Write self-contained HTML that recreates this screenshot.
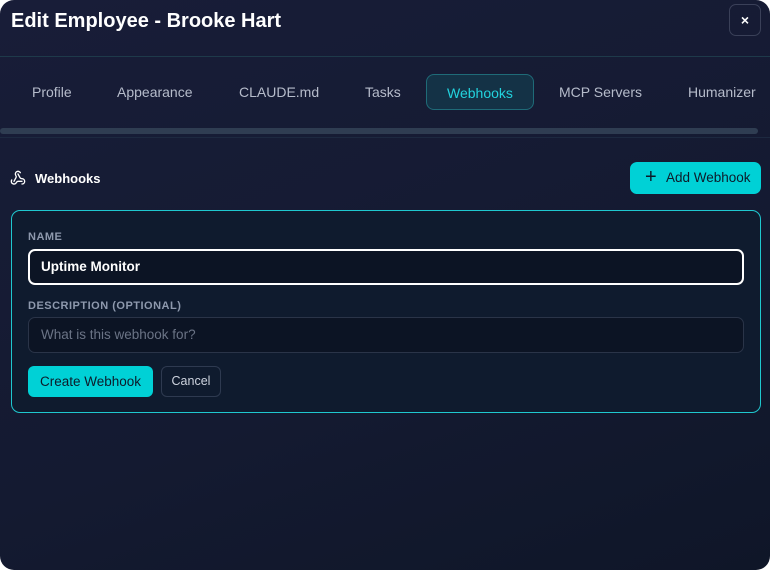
<!DOCTYPE html>
<html><head><style>
*{box-sizing:border-box;margin:0;padding:0}
html,body{width:770px;height:570px;background:#fff;overflow:hidden;font-family:"Liberation Sans",sans-serif}
.modal{position:absolute;left:0;top:0;width:770px;height:570px;border-radius:14px;background:linear-gradient(160deg,#181d38 0%,#141a31 60%,#0f1628 100%);overflow:hidden}
.title{position:absolute;left:11px;top:10px;color:#fff;font-size:20px;font-weight:bold}
.close{position:absolute;left:729px;top:4px;width:32px;height:32px;border:1px solid #3a4058;border-radius:7px;color:#fff;font-weight:bold;font-size:14px;text-align:center;line-height:30px}
.hr1{position:absolute;left:0;top:56px;width:770px;height:1px;background:#1e3a4a}
.tab{position:absolute;top:74px;height:36px;line-height:36px;color:#b6bccb;font-size:14px}
.tab.act{border:1px solid #1f6b78;background:#143246;color:#22d3de;border-radius:8px;padding:0 20px;left:426px;width:108px}
.scroll{position:absolute;left:0;top:128px;width:758px;height:6px;background:#2f3d52;border-radius:3px}
.hr2{position:absolute;left:0;top:137px;width:770px;height:1px;background:#1d2940}
.wh{position:absolute;left:35px;top:171px;color:#fff;font-weight:bold;font-size:13px}
.add{position:absolute;left:630px;top:162px;width:131px;height:32px;background:#00d1d6;border-radius:7px;color:#0d1b2a;font-size:13.5px;line-height:32px;padding-left:36px}
.add:before{content:"+";position:absolute;left:15px;top:-1px;font-size:20px}
.card{position:absolute;left:11px;top:210px;width:750px;height:203px;border:1px solid #1fc8cf;border-radius:9px;background:#0f1b2e}
.lbl{position:absolute;left:16px;color:#8e99ad;font-size:11px;font-weight:bold;letter-spacing:.5px}
.inp{position:absolute;left:16px;width:716px;height:36px;border-radius:7px;background:#0c1424;font-size:13.5px;padding-left:12px;line-height:34px}
.b1{position:absolute;left:16px;top:155px;width:125px;height:31px;background:#00d1d6;border-radius:6px;color:#0d1b2a;font-size:13.5px;text-align:center;line-height:31px}
.b2{position:absolute;left:149px;top:155px;width:60px;height:31px;border:1px solid #2e3a50;border-radius:6px;color:#cdd3de;font-size:12.5px;text-align:center;line-height:29px}
</style></head><body>
<div class="modal">
<div class="title">Edit Employee - Brooke Hart</div>
<div class="close">×</div>
<div class="hr1"></div>
<div class="tab" style="left:32px">Profile</div>
<div class="tab" style="left:117px">Appearance</div>
<div class="tab" style="left:239px">CLAUDE.md</div>
<div class="tab" style="left:365px">Tasks</div>
<div class="tab act">Webhooks</div>
<div class="tab" style="left:559px">MCP Servers</div>
<div class="tab" style="left:688px">Humanizer</div>
<div class="scroll"></div>
<div class="hr2"></div>
<svg style="position:absolute;left:10px;top:170px" width="16" height="16" viewBox="0 0 24 24" fill="none" stroke="#fff" stroke-width="2" stroke-linecap="round" stroke-linejoin="round"><path d="M18 16.98h-5.99c-1.1 0-1.95.94-2.48 1.9A4 4 0 0 1 2 17c.01-.7.2-1.4.57-2"/><path d="m6 17 3.13-5.78c.53-.97.1-2.18-.5-3.1a4 4 0 1 1 6.89-4.06"/><path d="m12 6 3.13 5.73C15.66 12.7 16.9 13 18 13a4 4 0 0 1 0 8"/></svg>
<div class="wh">Webhooks</div>
<div class="add">Add Webhook</div>
<div class="card">
<div class="lbl" style="top:20px">NAME</div>
<div class="inp" style="top:38px;border:2px solid #fff;color:#fff;font-weight:bold;line-height:32px;padding-left:11px">Uptime Monitor</div>
<div class="lbl" style="top:89px">DESCRIPTION (OPTIONAL)</div>
<div class="inp" style="top:106px;border:1px solid #2a3448;color:#6b7486">What is this webhook for?</div>
<div class="b1">Create Webhook</div>
<div class="b2">Cancel</div>
</div>
</div>
</body></html>
